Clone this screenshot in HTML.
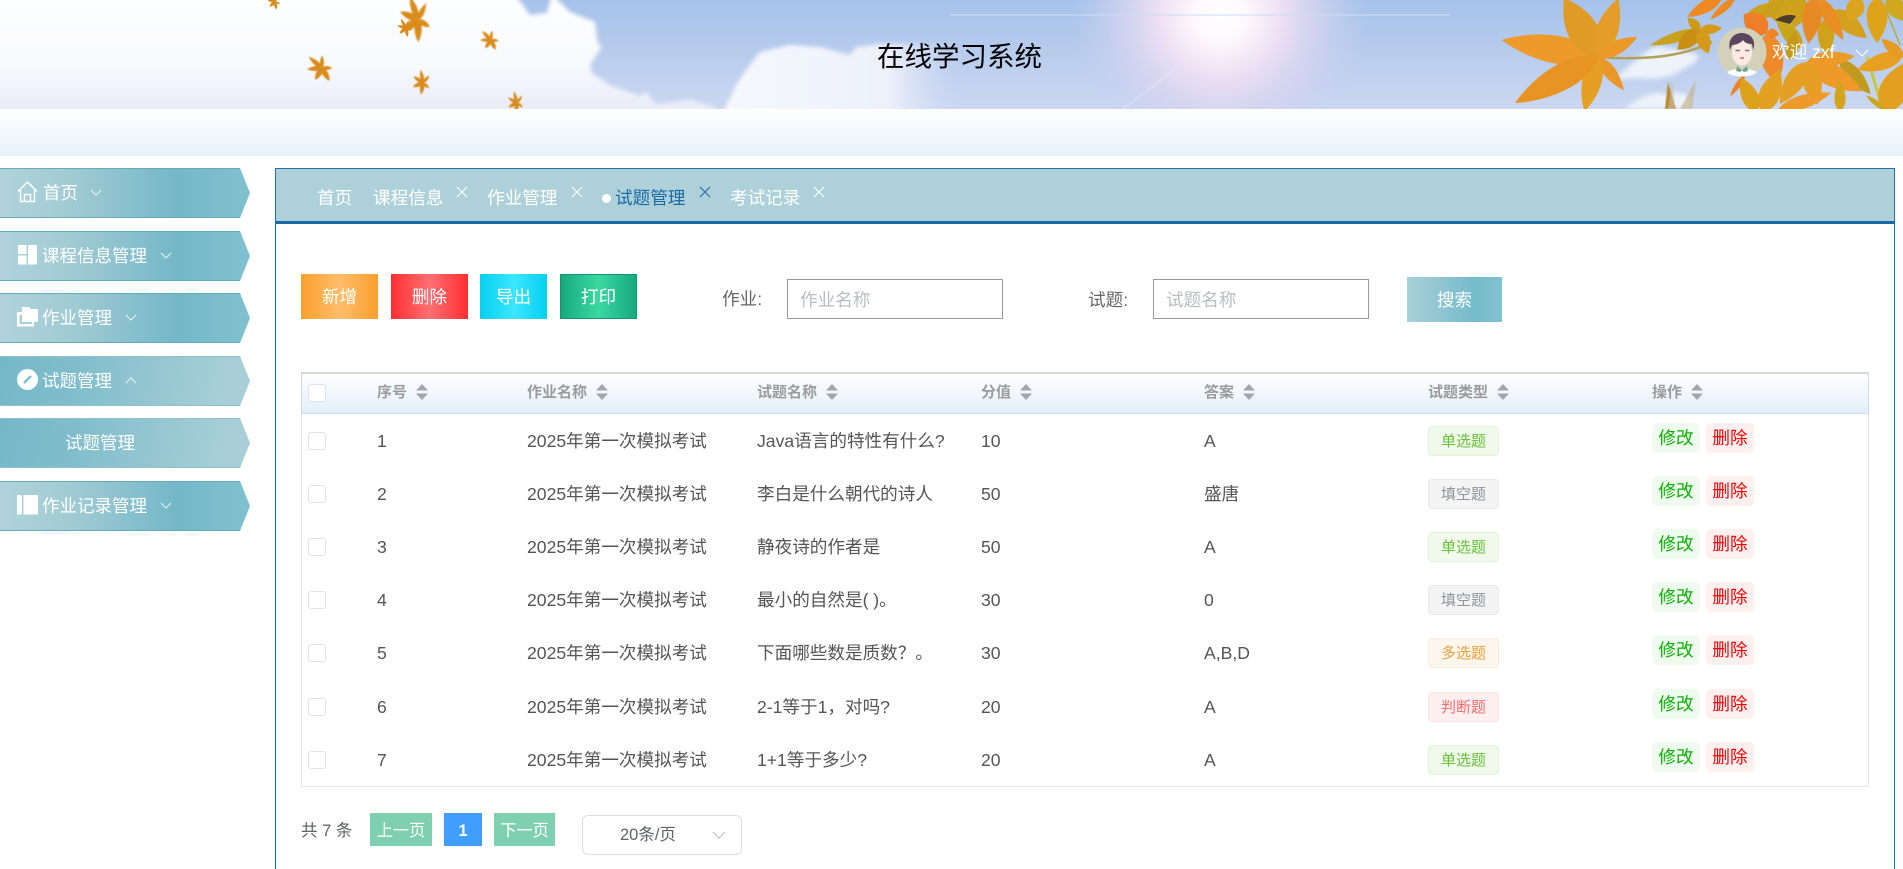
<!DOCTYPE html>
<html lang="zh"><head><meta charset="utf-8"><title>在线学习系统</title>
<style>
*{box-sizing:border-box;margin:0;padding:0}
html,body{width:1903px;height:869px;overflow:hidden;background:#fff;font-family:"Liberation Sans","Noto Sans CJK SC",sans-serif;color:#555}
.a{position:absolute;white-space:nowrap}
#hdr{position:absolute;left:0;top:0;width:1903px;height:109px}
#band{position:absolute;left:0;top:109px;width:1903px;height:47px;background:linear-gradient(#fff,#e6f1f9)}
.m{position:absolute;left:0;width:250px;height:50px;clip-path:polygon(0 0,240px 0,250px 50%,240px 100%,0 100%);background:linear-gradient(90deg,#b0d3da 0,#a0cad3 30%,#74b8c8 70%,#80c1ce 100%);border-top:1px solid #65aabd;border-bottom:1px solid #65aabd;color:#fff;font-size:17.5px;line-height:48px}
.m.r{background:linear-gradient(100deg,#74b8c8 0,#80bdcb 30%,#a8cfd7 90%,#a8cfd7 100%);border-color:#8fc0cc}
.m span{position:absolute;top:0;white-space:nowrap}
.m svg{position:absolute}
#box{position:absolute;left:275px;top:168px;width:1620px;height:701px;border:1px solid #1f72b0;border-bottom:0}
#tabs{position:absolute;left:276px;top:169px;width:1618px;height:55px;background:#aed1d9;border-bottom:3px solid #1a6aa8}
.t{position:absolute;top:184px;font-size:17.6px;line-height:28px;color:#fff;white-space:nowrap}
.b{position:absolute;top:274px;height:45px;color:#fff;font-size:17.6px;line-height:47px;text-align:center}
.inp{position:absolute;top:279px;height:40px;border:1px solid #999;border-bottom-width:1.5px;background:#fff;color:#b9bcc2;font-size:17.6px;line-height:41px;padding-left:12px}
.th{position:absolute;top:372px;left:301px;width:1568px;height:42px;background:linear-gradient(#fff 0,#e2eff9 100%);border:1px solid #cfd9e8;border-top-width:2px}
.h{position:absolute;top:383px;font-size:15px;font-weight:700;line-height:20px;color:#9b9b9b;white-space:nowrap}
.s{position:absolute;top:384px;width:12px;height:16px}
.c{position:absolute;left:308px;width:18px;height:18px;border:1px solid #dfe2ec;border-radius:3px;background:#fff}
.d{position:absolute;font-size:17.6px;line-height:26px;white-space:nowrap;color:#555}
.g{position:absolute;left:1428px;width:71px;height:30px;border:1px solid;border-radius:4px;font-size:15px;line-height:30px;text-align:center}
.g1{background:#f0f9eb;border-color:#e1f3d8;color:#67c23a}
.g2{background:#f4f4f5;border-color:#e9e9eb;color:#909399}
.g3{background:#fdf6ec;border-color:#faecd8;color:#e6a23c}
.g4{background:#fef0f0;border-color:#fde2e2;color:#f56c6c}
.e{position:absolute;width:48px;height:30px;border-radius:5px;font-size:17.6px;line-height:31px;text-align:center}
.e1{left:1652px;background:#f0fbf0;color:#09b000}
.e2{left:1706px;background:#fff0f0;color:#f00000}
.p{position:absolute;top:813px;height:33px;background:#7fcfb2;color:#fff;font-size:16.2px;line-height:36px;text-align:center}
</style></head><body>
<svg id="hdr" viewBox="0 0 1903 109" preserveAspectRatio="none" xmlns="http://www.w3.org/2000/svg">
<defs>
<linearGradient id="sky" x1="0" y1="0" x2="0" y2="1"><stop offset="0" stop-color="#a5c2ea"/><stop offset="1" stop-color="#cbd7f1"/></linearGradient>
<linearGradient id="cl" x1="0" y1="0" x2="0" y2="1"><stop offset="0" stop-color="#fff"/><stop offset=".6" stop-color="#f7f9fd"/><stop offset="1" stop-color="#e4e9f7"/></linearGradient>
<linearGradient id="cl2" x1="0" y1="0" x2="1" y2="0"><stop offset="0" stop-color="#f6f8fd"/><stop offset=".7" stop-color="#edf1fb"/><stop offset="1" stop-color="#d2dcf3" stop-opacity="0"/></linearGradient>
<radialGradient id="sun"><stop offset="0" stop-color="#fff"/><stop offset=".18" stop-color="#fdf8fc"/><stop offset=".42" stop-color="#ecdff3"/><stop offset=".72" stop-color="#d3d3ef" stop-opacity=".65"/><stop offset="1" stop-color="#c5d0ee" stop-opacity="0"/></radialGradient>
<filter id="b2" x="-10%" y="-20%" width="120%" height="140%"><feGaussianBlur stdDeviation="2"/></filter>
<filter id="b3" x="-20%" y="-20%" width="140%" height="140%"><feGaussianBlur stdDeviation="2.5"/></filter>
<filter id="b1"><feGaussianBlur stdDeviation=".5"/></filter>
<path id="l" d="M0 0C.5-.2.42-.65 0-1C-.42-.65-.5-.2 0 0Z"/>
<g id="fl" filter="url(#b1)">
<use href="#l" transform="rotate(-75) scale(6,13)"/>
<use href="#l" transform="rotate(-30) scale(6,15)"/>
<use href="#l" transform="rotate(20) scale(5,11)"/>
<use href="#l" transform="rotate(110) scale(5,9)"/>
<use href="#l" transform="rotate(170) scale(7,13)"/>
<use href="#l" transform="rotate(-130) scale(7,12)"/>
</g>
</defs>
<rect width="1903" height="109" fill="url(#sky)"/>
<circle cx="1220" cy="15" r="150" fill="url(#sun)"/>
<path d="M950 15H1450" stroke="#cfdcf6" stroke-width="2" opacity=".5"/>
<path d="M1123 109L1200 50" stroke="#ecebf8" stroke-width="1.5" opacity=".45"/>
<path filter="url(#b2)" d="M-10-10H512L530 15L547 13L552-6L560 2L570 12L595 22L597 40L601 48L590 65L592 73L610 85L640 96L646 92L656 104L690 100L712 106L730 120H-10Z" fill="url(#cl)"/>
<path filter="url(#b2)" d="M722 115L736 85L746 70L760 52L790 45L820 47L850 55L856 47L880 44L960 44V115Z" fill="url(#cl2)"/>
<g filter="url(#b3)" fill="#edf2fb">
<path d="M1610 80C1630 70 1650 40 1665 48C1690 50 1710 55 1690 65C1670 80 1650 80 1640 78Z"/>
<path d="M1625 109C1640 95 1660 90 1665 95C1680 90 1695 95 1690 105L1690 109Z"/>
<path d="M1560 60C1570 40 1590 35 1600 45L1590 62Z"/>
</g>
<!-- scattered leaves -->
<g fill="#d98b1c">
<use href="#fl" transform="translate(418,20) rotate(8) scale(1.5,1.7)"/>
<use href="#fl" transform="translate(406,28) scale(.7)"/>
<use href="#fl" transform="translate(491,40) rotate(-15) scale(.85)"/>
<use href="#fl" transform="translate(322,68) rotate(-20) scale(1.15)"/>
<use href="#fl" transform="translate(423,83) rotate(20) scale(.9)"/>
<use href="#fl" transform="translate(517,103) rotate(15) scale(.8)"/>
<use href="#fl" transform="translate(275,2) scale(.6)"/>
</g>
<!-- branch -->
<path d="M1598 57C1640 60 1680 58 1712 42" stroke="#b3a05a" stroke-width="2.5" fill="none"/>
<!-- big leaf -->
<g transform="translate(1598,57)">
<use href="#l" fill="#ee9a2a" transform="rotate(-80) scale(40,98)"/>
<use href="#l" fill="#e09a26" transform="rotate(-30) scale(44,68)"/>
<use href="#l" fill="#e49d28" transform="rotate(19) scale(32,62)"/>
<use href="#l" fill="#eb9a2a" transform="rotate(63) scale(20,44)"/>
<use href="#l" fill="#e9962a" transform="rotate(142) scale(18,42)"/>
<use href="#l" fill="#e5a024" transform="rotate(-166) scale(28,56)"/>
<use href="#l" fill="#e89424" transform="rotate(-119) scale(38,95)"/>
</g>
<!-- blurred stems -->
<g filter="url(#b1)">
<path d="M1665 109L1668 82L1676 109Z" fill="#b9862c"/>
<path d="M1680 109L1696 80L1692 109Z" fill="#c5b58e" opacity=".7"/>
<path d="M1672 80L1675 109H1668Z" fill="#c7c0a8" opacity=".6"/>
</g>
<!-- upper mid leaflets -->
<g fill="#ee8a22">
<use href="#l" transform="translate(1722,-3) rotate(-120) scale(18,40)"/>
<use href="#l" transform="translate(1735,-2) rotate(-131) scale(11,33)"/>
</g>
<g transform="translate(1700,30)">
<use href="#l" fill="#c8a11e" transform="rotate(-107) scale(15,52)"/>
<use href="#l" fill="#c98f14" transform="rotate(-131) scale(22,30)"/>
<use href="#l" fill="#d59a1a" transform="rotate(161) scale(20,25)"/>
<use href="#l" fill="#cc9a18" transform="rotate(-45) scale(14,17)"/>
<use href="#l" fill="#d59a1a" transform="rotate(85) scale(14,22)"/>
</g>
<!-- right foliage: back layer -->
<g>
<use href="#l" fill="#d0a01c" transform="translate(1745,18) rotate(70) scale(20,44)"/>
<use href="#l" fill="#d2a01c" transform="translate(1772,-3) rotate(160) scale(26,30)"/>
<use href="#l" fill="#cfa01c" transform="translate(1802,-3) rotate(-165) scale(28,32)"/>
<use href="#l" fill="#c8a01a" transform="translate(1790,2) rotate(-115) scale(20,36)"/>
<use href="#l" fill="#cfa21c" transform="translate(1795,-2) rotate(-150) scale(22,34)"/>
<use href="#l" fill="#d3a020" transform="translate(1833,10) rotate(130) scale(26,44)"/>
<use href="#l" fill="#cfa21a" transform="translate(1826,18) rotate(180) scale(24,38)"/>
<use href="#l" fill="#c9a51c" transform="translate(1802,48) rotate(-40) scale(22,40)"/>
<use href="#l" fill="#c49a1a" transform="translate(1790,60) rotate(10) scale(18,30)"/>
<use href="#l" fill="#dca31c" transform="translate(1860,-2) rotate(-155) scale(26,26)"/>
<use href="#l" fill="#dda31a" transform="translate(1877,-3) rotate(180) scale(30,46)"/>
<use href="#l" fill="#d0a820" transform="translate(1887,-3) rotate(140) scale(26,32)"/>
<use href="#l" fill="#bf9a20" transform="translate(1840,60) rotate(138) scale(22,46)"/>
</g>
<path d="M1775 20C1782 15 1790 14 1796 16L1790 24Z" fill="#4d3d2a"/>
<path d="M1867 57L1880 100" stroke="#c9c83a" stroke-width="3"/>
<path d="M1886 10L1900 45" stroke="#bda93a" stroke-width="1.5"/>
<!-- orange leaf behind avatar -->
<g transform="translate(1767,33)">
<use href="#l" fill="#ee7f28" transform="rotate(-51) scale(32,30)"/>
<use href="#l" fill="#ee8a2a" transform="rotate(169) scale(34,52)"/>
<use href="#l" fill="#ec8526" transform="rotate(95) scale(14,12)"/>
</g>
<use href="#l" fill="#ee8226" transform="translate(1745,75) rotate(-145) scale(8,26)"/>
<!-- top orange strips -->
<use href="#l" fill="#e88a24" transform="translate(1815,-4) rotate(188) scale(28,48)"/>
<use href="#l" fill="#ea8d22" transform="translate(1820,-2) rotate(151) scale(20,48)"/>
<!-- central lower leaf -->
<g transform="translate(1807,62)">
<use href="#l" fill="#ed9a26" transform="rotate(83) scale(22,48)"/>
<use href="#l" fill="#ee9a2a" transform="rotate(118) scale(32,62)"/>
<use href="#l" fill="#e5a024" transform="rotate(-147) scale(28,50)"/>
<use href="#l" fill="#e5a024" transform="rotate(166) scale(28,44)"/>
</g>
<g>
<use href="#l" fill="#e4a020" transform="translate(1762,112) rotate(23) scale(30,46)"/>
<use href="#l" fill="#dea11c" transform="translate(1757,112) rotate(-25) scale(24,38)"/>
<use href="#l" fill="#d3a41c" transform="translate(1840,112) rotate(0) scale(16,32)"/>
<use href="#l" fill="#ee9a2a" transform="translate(1778,110) rotate(72) scale(20,56)"/>
<use href="#l" fill="#e8a020" transform="translate(1903,55) rotate(-108) scale(24,48)"/>
<use href="#l" fill="#e59a20" transform="translate(1903,57) rotate(-50) scale(16,28)"/>
<use href="#l" fill="#e39f1f" transform="translate(1885,112) rotate(21) scale(40,52)"/>
<use href="#l" fill="#c9a81e" transform="translate(1885,110) rotate(-52) scale(8,24)"/>
</g>
<!-- avatar -->
<circle cx="1742" cy="52" r="24.5" fill="#d3d2b8"/>
<path d="M1727 72C1733 68 1751 68 1757 72C1752 78 1732 78 1727 72Z" fill="#fff"/>
<path d="M1737 66L1742 70L1747 66L1748 71L1744 72L1742 70.500L1740 72L1736 71Z" fill="#6ea592"/>
<ellipse cx="1742" cy="53" rx="10" ry="12.500" fill="#fbeae3"/>
<path d="M1730 50C1727 38 1735 33 1742 33C1750 33 1757 40 1753 50L1752 44C1748 44 1745 43 1743 40C1741 43 1736 45 1732 45Z" fill="#5c4460"/>
<path d="M1735.500 50.500h4.500M1745 50.500h4.500" stroke="#7d7378" stroke-width="1.500"/>
<path d="M1740 58h4" stroke="#e9635c" stroke-width="1.500"/>
</svg>
<div id="band"></div>
<div class="a" style="left:877px;top:38px;font-size:27.5px;line-height:38px;color:#000">在线学习系统</div>
<div class="a" style="left:1772px;top:39px;font-size:17.6px;line-height:26px;color:#fff">欢迎 zxf</div>
<svg class="a" style="left:1855px;top:49px" width="14" height="9" fill="none" stroke="#fff" stroke-width="1"><path d="M1 1L7 7L13 1"/></svg>

<div class="m" style="top:168px"><svg style="left:17px;top:12px" width="21" height="22" fill="none" stroke="#fff" stroke-width="1.500"><path d="M1 10.500L10.500 1L20 10.500M3.500 8.500V20.500H17.500V8.500M7.500 20.500V13.500H13.500V20.500"/></svg><span style="left:43px">首页</span><svg style="left:90px;top:20px" width="12" height="8" fill="none" stroke="#e8f4f6"><path d="M1 1L6 6L11 1"/></svg></div>
<div class="m" style="top:231px"><svg style="left:18px;top:13px" width="19" height="20" fill="#fff"><rect width="8.500" height="9"/><rect y="10.500" width="8.500" height="9"/><rect x="10" width="9" height="19.500"/></svg><span style="left:42px">课程信息管理</span><svg style="left:160px;top:20px" width="12" height="8" fill="none" stroke="#e8f4f6"><path d="M1 1L6 6L11 1"/></svg></div>
<div class="m" style="top:293px"><svg style="left:17px;top:13px" width="21" height="20" fill="#fff"><path d="M5 0H12L14 2H21V15H18V5H5Z"/><path fill-rule="evenodd" d="M0 5H17V19.500H0ZM2.500 8V17H15V8Z"/><rect x="5" y="3" width="16" height="12"/></svg><span style="left:42px">作业管理</span><svg style="left:125px;top:20px" width="12" height="8" fill="none" stroke="#e8f4f6"><path d="M1 1L6 6L11 1"/></svg></div>
<div class="m r" style="top:356px"><svg style="left:17px;top:12px" width="21" height="21"><circle cx="10.500" cy="10.500" r="10.500" fill="#fff"/><path d="M7 14L14 7" stroke="#7dbccb" stroke-width="2.400"/></svg><span style="left:42px">试题管理</span><svg style="left:125px;top:19px" width="12" height="8" fill="none" stroke="#e8f4f6"><path d="M1 7L6 2L11 7"/></svg></div>
<div class="m r" style="top:418px"><span style="left:65px">试题管理</span></div>
<div class="m" style="top:481px"><svg style="left:17px;top:13px" width="21" height="20" fill="#fff"><rect width="5" height="19.500"/><rect x="6.500" width="14.500" height="19.500"/></svg><span style="left:42px">作业记录管理</span><svg style="left:160px;top:20px" width="12" height="8" fill="none" stroke="#e8f4f6"><path d="M1 1L6 6L11 1"/></svg></div>

<div id="box"></div>
<div id="tabs"></div>
<div class="t" style="left:317px">首页</div>
<div class="t" style="left:373px">课程信息</div>
<div class="t" style="left:487px">作业管理</div>
<div class="t" style="left:615px;color:#1a6aa8">试题管理</div>
<div class="t" style="left:730px">考试记录</div>
<div class="a" style="left:602px;top:194px;width:9px;height:9px;border-radius:50%;background:#fff"></div>
<svg class="a" style="left:456px;top:186px" width="12" height="12" fill="none" stroke="#fff"><path d="M1 1L11 11M11 1L1 11"/></svg>
<svg class="a" style="left:571px;top:186px" width="12" height="12" fill="none" stroke="#fff"><path d="M1 1L11 11M11 1L1 11"/></svg>
<svg class="a" style="left:699px;top:186px" width="12" height="12" fill="none" stroke="#1a6aa8"><path d="M1 1L11 11M11 1L1 11"/></svg>
<svg class="a" style="left:813px;top:186px" width="12" height="12" fill="none" stroke="#fff"><path d="M1 1L11 11M11 1L1 11"/></svg>

<div class="b" style="left:301px;width:77px;background:linear-gradient(90deg,#f9a02c,#ffbd6b 50%,#f9a02c)">新增</div>
<div class="b" style="left:391px;width:77px;background:linear-gradient(90deg,#ff2e30,#ff6f73 50%,#ff2e30)">删除</div>
<div class="b" style="left:480px;width:67px;background:linear-gradient(90deg,#05d0f0,#3ce6ff 50%,#05d0f0)">导出</div>
<div class="b" style="left:560px;width:77px;background:linear-gradient(90deg,#17a97d,#3bd8a2 50%,#17a97d);border:1px solid #0f9a6e;line-height:45px">打印</div>
<div class="d" style="left:722px;top:286px;color:#666">作业:</div>
<div class="inp" style="left:787px;width:216px">作业名称</div>
<div class="d" style="left:1088px;top:287px;color:#666">试题:</div>
<div class="inp" style="left:1153px;width:216px">试题名称</div>
<div class="b" style="left:1407px;top:277px;width:95px;line-height:47px;background:linear-gradient(90deg,#a9d0d8,#76bbca 70%,#80c1ce)">搜索</div>

<div class="a" style="left:301px;top:413px;width:1568px;height:374px;border:1px solid #e3e6f0;border-top:0"></div>
<div class="th"></div>
<div class="c" style="top:384px"></div>
<div class="h" style="left:377px">序号</div><svg class="s" style="left:416px" viewBox="0 0 12 16" fill="#a3a5ac"><path d="M6 0L12 6.500H0ZM0 9.500H12L6 16Z"/></svg>
<div class="h" style="left:527px">作业名称</div><svg class="s" style="left:596px" viewBox="0 0 12 16" fill="#a3a5ac"><path d="M6 0L12 6.500H0ZM0 9.500H12L6 16Z"/></svg>
<div class="h" style="left:757px">试题名称</div><svg class="s" style="left:826px" viewBox="0 0 12 16" fill="#a3a5ac"><path d="M6 0L12 6.500H0ZM0 9.500H12L6 16Z"/></svg>
<div class="h" style="left:981px">分值</div><svg class="s" style="left:1020px" viewBox="0 0 12 16" fill="#a3a5ac"><path d="M6 0L12 6.500H0ZM0 9.500H12L6 16Z"/></svg>
<div class="h" style="left:1204px">答案</div><svg class="s" style="left:1243px" viewBox="0 0 12 16" fill="#a3a5ac"><path d="M6 0L12 6.500H0ZM0 9.500H12L6 16Z"/></svg>
<div class="h" style="left:1428px">试题类型</div><svg class="s" style="left:1497px" viewBox="0 0 12 16" fill="#a3a5ac"><path d="M6 0L12 6.500H0ZM0 9.500H12L6 16Z"/></svg>
<div class="h" style="left:1652px">操作</div><svg class="s" style="left:1691px" viewBox="0 0 12 16" fill="#a3a5ac"><path d="M6 0L12 6.500H0ZM0 9.500H12L6 16Z"/></svg>

<div class="c" style="top:432px"></div><div class="d" style="left:377px;top:428px">1</div><div class="d" style="left:527px;top:428px">2025年第一次模拟考试</div><div class="d" style="left:757px;top:428px">Java语言的特性有什么?</div><div class="d" style="left:981px;top:428px">10</div><div class="d" style="left:1204px;top:428px">A</div><div class="g g1" style="top:426px">单选题</div><div class="e e1" style="top:423px">修改</div><div class="e e2" style="top:423px">删除</div>
<div class="c" style="top:485px"></div><div class="d" style="left:377px;top:481px">2</div><div class="d" style="left:527px;top:481px">2025年第一次模拟考试</div><div class="d" style="left:757px;top:481px">李白是什么朝代的诗人</div><div class="d" style="left:981px;top:481px">50</div><div class="d" style="left:1204px;top:481px">盛唐</div><div class="g g2" style="top:479px">填空题</div><div class="e e1" style="top:476px">修改</div><div class="e e2" style="top:476px">删除</div>
<div class="c" style="top:538px"></div><div class="d" style="left:377px;top:534px">3</div><div class="d" style="left:527px;top:534px">2025年第一次模拟考试</div><div class="d" style="left:757px;top:534px">静夜诗的作者是</div><div class="d" style="left:981px;top:534px">50</div><div class="d" style="left:1204px;top:534px">A</div><div class="g g1" style="top:532px">单选题</div><div class="e e1" style="top:529px">修改</div><div class="e e2" style="top:529px">删除</div>
<div class="c" style="top:591px"></div><div class="d" style="left:377px;top:587px">4</div><div class="d" style="left:527px;top:587px">2025年第一次模拟考试</div><div class="d" style="left:757px;top:587px">最小的自然是( )。</div><div class="d" style="left:981px;top:587px">30</div><div class="d" style="left:1204px;top:587px">0</div><div class="g g2" style="top:585px">填空题</div><div class="e e1" style="top:582px">修改</div><div class="e e2" style="top:582px">删除</div>
<div class="c" style="top:644px"></div><div class="d" style="left:377px;top:640px">5</div><div class="d" style="left:527px;top:640px">2025年第一次模拟考试</div><div class="d" style="left:757px;top:640px">下面哪些数是质数？。</div><div class="d" style="left:981px;top:640px">30</div><div class="d" style="left:1204px;top:640px">A,B,D</div><div class="g g3" style="top:638px">多选题</div><div class="e e1" style="top:635px">修改</div><div class="e e2" style="top:635px">删除</div>
<div class="c" style="top:698px"></div><div class="d" style="left:377px;top:694px">6</div><div class="d" style="left:527px;top:694px">2025年第一次模拟考试</div><div class="d" style="left:757px;top:694px">2-1等于1，对吗?</div><div class="d" style="left:981px;top:694px">20</div><div class="d" style="left:1204px;top:694px">A</div><div class="g g4" style="top:692px">判断题</div><div class="e e1" style="top:689px">修改</div><div class="e e2" style="top:689px">删除</div>
<div class="c" style="top:751px"></div><div class="d" style="left:377px;top:747px">7</div><div class="d" style="left:527px;top:747px">2025年第一次模拟考试</div><div class="d" style="left:757px;top:747px">1+1等于多少?</div><div class="d" style="left:981px;top:747px">20</div><div class="d" style="left:1204px;top:747px">A</div><div class="g g1" style="top:745px">单选题</div><div class="e e1" style="top:742px">修改</div><div class="e e2" style="top:742px">删除</div>

<div class="a" style="left:301px;top:820px;font-size:16.500px;line-height:22px;color:#606266">共 7 条</div>
<div class="p" style="left:370px;width:62px">上一页</div>
<div class="p" style="left:444px;width:38px;background:#409eff;font-weight:700">1</div>
<div class="p" style="left:494px;width:61px">下一页</div>
<div class="a" style="left:582px;top:815px;width:160px;height:40px;border:1px solid #dcdfe6;border-radius:6px;background:#fff;font-size:16.500px;line-height:39px;color:#606266;padding-left:37px">20条/页</div>
<svg class="a" style="left:712px;top:831px" width="14" height="9" fill="none" stroke="#b8bbc2"><path d="M1 1L7 7L13 1"/></svg>
</body></html>
